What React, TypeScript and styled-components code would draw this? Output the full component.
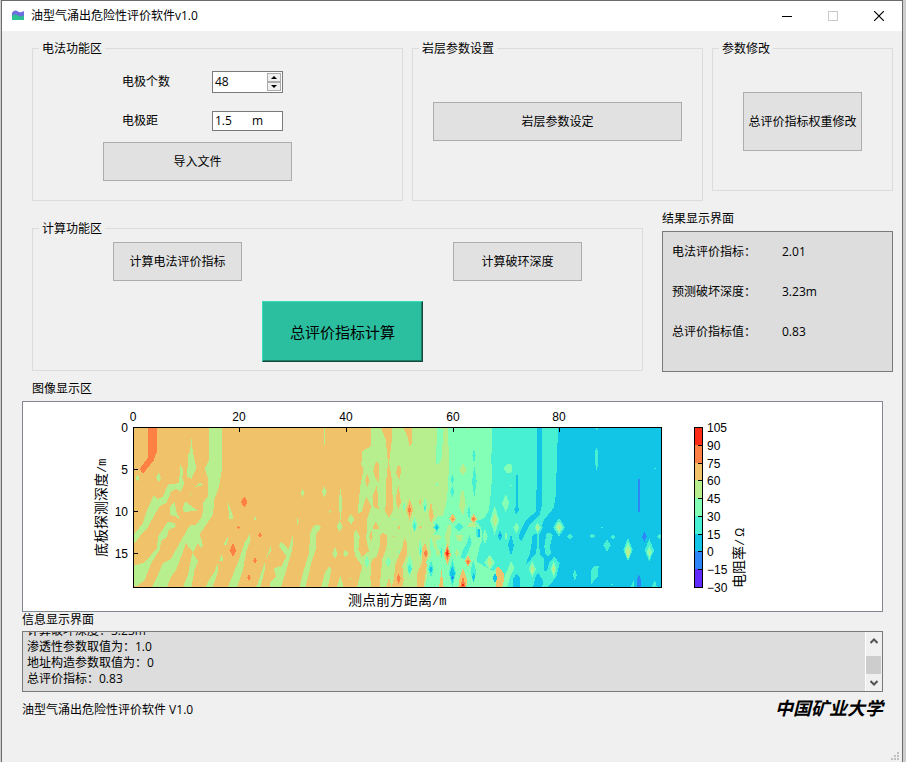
import React, { useState } from "react";
import styled, { createGlobalStyle, css } from "styled-components";

const GlobalStyle = createGlobalStyle`
  * { box-sizing: border-box; }
  body {
    margin: 0;
    font-family: "Open Sans", "Noto Sans CJK SC", sans-serif;
    font-size: 12px;
    line-height: 16px;
    color: #000;
  }
  button, input { font: inherit; color: inherit; }
`;

/* ---------- window frame ---------- */

const Desktop = styled.div`
  display: flex;
  min-height: 100vh;
  padding: 0 3px 0 1px;
  background: #cfcdcd;
`;

const Window = styled.div`
  flex: 1;
  min-width: 0;
  display: flex;
  flex-direction: column;
  background: #f0f0f0;
  border: 1px solid #6c6b6e;
  border-bottom: 0;
`;

const TitleBar = styled.header`
  display: flex;
  align-items: center;
  height: 30px;
  padding-left: 9px;
  background: #fff;
`;

const Title = styled.h1`
  flex: 1;
  margin: 0 0 0 6px;
  font-size: 12px;
  font-weight: 400;
`;

const CaptionButton = styled.button`
  display: grid;
  place-items: center;
  width: 46px;
  height: 30px;
  padding: 0;
  border: 0;
  background: none;
  color: #000;
  &:disabled { color: #c9c9c9; }
`;

const Main = styled.main`
  flex: 1;
  display: flex;
  flex-direction: column;
`;

/* ---------- layout ---------- */

const Sections = styled.div`
  display: flex;
  flex-direction: column;
  gap: 10px;
  padding: 8px 9px 0 30px;
`;

const SettingsRow = styled.div`
  display: grid;
  grid-template-columns: 371fr 291fr 181fr;
  align-items: start;
  gap: 9px;
`;

const ComputeRow = styled.div`
  display: grid;
  grid-template-columns: 611fr 231fr;
  align-items: start;
  gap: 19px;
`;

const GroupBox = styled.fieldset<{ $lowered?: boolean }>`
  min-width: 0;
  margin: ${(p) => (p.$lowered ? 8 : 0)}px 0 0;
  border: 1px solid #dcdcdc;
  padding: 0;
`;

const GroupBody = styled.div<{ $pad: string }>`
  padding: ${(p) => p.$pad};
`;

const Legend = styled.legend`
  margin-left: 6px;
  padding: 2px 3px 0;
`;

const Stack = styled.div`
  width: 189px;
  display: flex;
  flex-direction: column;
`;

const Field = styled.div<{ $after: number }>`
  display: grid;
  grid-template-columns: 90px 71px;
  align-items: center;
  padding-left: 19px;
  margin-bottom: ${(p) => p.$after}px;
`;

const InputFrame = styled.div<{ $height: number }>`
  display: flex;
  align-items: center;
  height: ${(p) => p.$height}px;
  padding: 1px 1px 1px 2px;
  background: #fff;
  border: 1px solid #7a7a7a;
`;

const TextInput = styled.input<{ $width: number }>`
  width: ${(p) => p.$width}px;
  height: 16px;
  padding: 0;
  border: 0;
  outline: 0;
  background: none;
`;

const Spinner = styled.div`
  display: flex;
  flex-direction: column;
  margin-left: auto;
`;

const StepButton = styled.button`
  display: grid;
  place-items: center;
  width: 14px;
  height: 9px;
  padding: 0;
  border: 1px solid #acacac;
  background: #f0f0f0;
`;

const PushButton = styled.button<{ $width?: number; $tall?: boolean }>`
  display: block;
  width: ${(p) => (p.$width ? `${p.$width}px` : "100%")};
  height: ${(p) => (p.$tall ? 59 : 39)}px;
  padding: 0;
  white-space: nowrap;
  background: #e1e1e1;
  border: 1px solid #adadad;
`;

const PrimaryButton = styled.button`
  width: 161px;
  height: 61px;
  padding: 0;
  font-size: 15px;
  background: #2bbf9f;
  border: 1px solid;
  border-color: #35dcb8 #16493e #16493e #35dcb8;
  box-shadow: inset -1px -1px 0 #1c7c68;
`;

const Centered = styled.div<{ $shift?: boolean }>`
  display: flex;
  justify-content: center;
  ${(p) => p.$shift && css`padding: 20px 0 0 10px;`}
`;

const ButtonPair = styled.div`
  display: flex;
  justify-content: space-between;
  padding: 0 60px 0 80px;
`;

/* ---------- results ---------- */

const Caption = styled.h2`
  margin: 0 0 4px;
  font-size: 12px;
  font-weight: 400;
`;

const ResultList = styled.dl`
  display: grid;
  grid-template-columns: 110px 1fr;
  grid-auto-rows: 40px;
  align-items: center;
  margin: 0;
  padding: 0 0 19px 9px;
  background: #ddd;
  border: 1px solid #7a7a7a;
`;

const ResultValue = styled.dd`
  margin: 0;
`;

/* ---------- image area, log, footer ---------- */

const Figure = styled.section`
  padding: 9px 19px 0 20px;
`;

const ImageCaption = styled(Caption)`
  padding-left: 10px;
`;

const ChartPanel = styled.div`
  background: #fff;
  border: 1px solid #828790;
  overflow: hidden;
`;

const Chart = styled.svg`
  display: block;
  font-family: "Liberation Sans", "Noto Sans CJK SC", sans-serif;
`;

const LogSection = styled.section`
  padding: 0 19px 0 20px;
`;

const LogCaption = styled(Caption)`
  margin-bottom: 3px;
`;

const LogBox = styled.div`
  display: flex;
  height: 61px;
  background: #ddd;
  border: 1px solid #7a7a7a;
`;

const LogText = styled.div`
  flex: 1;
  display: flex;
  flex-direction: column;
  justify-content: flex-end;
  overflow: hidden;
  padding: 0 4px 4px;
`;

const LogLine = styled.p`
  flex: none;
  margin: 0;
`;

const ScrollBar = styled.div`
  display: flex;
  flex-direction: column;
  width: 17px;
  background: #f0f0f0;
  border-left: 1px solid #fff;
`;

const ScrollButton = styled.button`
  display: grid;
  place-items: center;
  width: 100%;
  height: 17px;
  padding: 0;
  border: 0;
  background: none;
`;

const ScrollTrack = styled.div`
  flex: 1;
  padding-top: 7px;
`;

const ScrollThumb = styled.div`
  width: 15px;
  height: 18px;
  background: #cdcdcd;
`;

const Footer = styled.footer`
  display: flex;
  justify-content: space-between;
  align-items: flex-end;
  padding: 6px 19px 0 20px;
`;

const School = styled.span`
  font-size: 18px;
  line-height: 20px;
  font-weight: 700;
  font-style: italic;
`;

const GripRow = styled.div`
  display: flex;
  justify-content: flex-end;
  margin-top: auto;
  padding: 0 3px 2px;
`;

/* ---------- contour chart ---------- */

const ORANGE = "#f0c36b";
const LIME = "#b8ef8e";
const AQUA = "#83ffb6";
const TURQ = "#48f0d3";
const BLUE = "#12c5e7";
const DEEP = "#2c86f7";
const CORAL = "#ff8045";
const RED = "#ff2c17";
const VIOLET = "#612aff";

type Diamond = [number, number, number, number];

const diamondPath = (list: Diamond[]) =>
  list.map(([x, y, w, h]) => `M${x},${y - h}L${x + w},${y}L${x},${y + h}L${x - w},${y}Z`).join("");

const Diamonds = ({ fill, at }: { fill: string; at: Diamond[] }) => <path fill={fill} d={diamondPath(at)} />;

const LeftField = () => (
  <g transform="translate(-160 -82)">
    <path
      fill={CORAL}
      d="M204,82H231V158L222,182L190,222L180,208L204,175Z"
    />
    <path
      fill={LIME}
      d="M388,82H426V215L418,262L404,300L400,345L380,375L360,403L370,438L364,446L355,430L340,458L318,430L305,470L290,510L275,530L262,562H217L235,525L250,490L272,480L300,430L330,378L350,375L368,350L370,310L384,290L386,240L375,208L388,180Z
      M338,458L356,485L345,510L335,562H310L325,525L332,490Z
      M162,405L190,370L205,325L222,288L235,298L250,290L265,255L298,250L290,268L275,275L260,310L240,320L225,345L200,390L180,410L162,434Z
      M302,196L310,208L308,235L314,250L303,278L285,262L298,250Z
      M162,498L195,488L232,445L235,410L265,366L285,370L288,382L268,390L262,410L245,425L240,450L215,490L195,540L175,558L162,560Z
      M334,105L340,160L350,205L335,238L322,230L326,165L332,155Z
      M345,262L360,250L372,256Z
      M285,308L291,340L302,360L288,350L270,346L272,320Z
      M316,305L354,333L312,337L310,322Z
      M445,305L462,358H448Z M522,352H528V362H522Z M446,406L442,435H432Z M428,458L429,485H418Z
      M510,402L513,420L500,455L490,510L472,562H445L462,520L480,475L495,430Z
      M413,490L416,512L405,545L398,562H378L385,545L405,515Z
      M575,432L573,455L558,482Z M556,485V510L542,562H530L545,520Z
      M600,500L583,510L592,540L568,562H600Z"
    />
    <Diamonds fill={LIME} at={[[237, 234, 7, 15], [174, 235, 6, 11], [333, 283, 4, 2], [268, 433, 2, 2]]} />
    <Diamonds fill={CORAL} at={[[494, 307, 10, 17], [477, 384, 4, 4], [541, 407, 5, 9], [460, 452, 10, 21], [526, 482, 5, 11], [508, 533, 5, 11]]} />
  </g>
);

const MiddleField = () => (
  <g transform="translate(410 -82)">
    <path
      fill={LIME}
      d="M303,82H660V562H262L278,500L258,470L252,450V400L260,390L270,410L266,450L276,472L298,455L290,420L292,360L305,320L290,290L275,338L264,340L272,260L282,210L275,195L278,155L303,140Z
      M162,86H167V130L164,138L162,128Z
      M212,264L218,310L212,365L207,310Z
      M130,380L145,374L154,384L138,405V450L125,490L108,562H90L100,520L118,460L122,400Z
      M178,500L185,510L175,562H155L165,520Z
      M70,405L68,450L50,510L35,562H0V550L18,530L14,505L35,500L50,470L28,440L35,425L56,450Z
      M212,528L222,562H202Z M82,350L87,365L84,385Z"
    />
    <Diamonds fill={LIME} at={[[99, 280, 6, 12], [164, 276, 7, 18], [244, 359, 10, 16], [210, 380, 9, 17], [196, 461, 8, 18], [228, 461, 8, 12], [180, 335, 3, 6], [34, 284, 2, 2], [242, 537, 3, 3]]} />
    <path
      fill={ORANGE}
      d="M335,82H366V125L358,190L367,240L370,330L358,356L347,335L350,240L355,190L348,120L335,88Z
      M400,82H426V132L420,140L414,112Z
      M322,185L329,198V250L318,235L311,215L316,192Z
      M322,255L327,328L312,322L308,292Z
      M386,194L394,205L391,242L379,220Z M386,255L394,308L386,330L378,300Z
      M484,303L492,350L484,370L477,345Z
      M318,365L330,388L308,388Z M305,392L309,410L305,426L299,410Z
      M340,398L352,408L350,450L338,475L330,562H305L302,535L306,480L322,470L330,440L332,405Z
      M404,415L413,430L412,465L398,500L402,540L398,562H366L372,540L378,490L398,445Z
      M466,430L475,455L472,490L462,562H442L443,520L458,485L455,450Z
      M358,532L365,562H350Z"
    />
    <Diamonds fill={ORANGE} at={[[293, 242, 7, 22], [420, 330, 11, 34], [452, 307, 3, 10], [388, 384, 4, 6], [452, 384, 4, 4], [372, 411, 3, 3]]} />
    <path
      fill={AQUA}
      d="M503,82L522,90L515,180L505,195L498,190ZM535,82H680V562H466L474,520L470,485L484,470L480,420L500,390L490,370L505,350L520,350L530,310L535,265L538,190Z"
    />
    <Diamonds fill={AQUA} at={[[435, 375, 9, 24], [466, 317, 6, 25], [403, 320, 4, 16], [374, 360, 3, 3], [356, 487, 8, 17], [292, 487, 7, 18], [420, 498, 10, 35], [388, 457, 3, 6], [452, 447, 6, 30], [502, 255, 2, 20]]} />
    <path
      fill={LIME}
      d="M482,405H510L516,414L498,426L504,445L495,450L488,425Z M545,375L540,440L530,440L526,410L535,375Z M555,405H580L575,425H565Z M500,445L512,455L506,475L498,460Z M574,275H582L588,315L580,348L568,320Z"
    />
    <Diamonds fill={LIME} at={[[580, 210, 11, 18], [562, 460, 6, 14]]} />
    <Diamonds fill={TURQ} at={[[435, 380, 5, 14], [466, 325, 3, 12], [420, 508, 7, 16], [452, 455, 2, 10], [501, 383, 10, 14], [484, 508, 8, 25], [548, 240, 5, 16], [548, 276, 6, 18], [568, 382, 13, 14], [548, 520, 11, 44], [515, 458, 3, 16], [292, 487, 2, 3]]} />
    <path fill={TURQ} d="M600,405L592,430L578,455L574,474L584,478L596,455L606,430ZM600,320L594,345L600,355Z" />
    <Diamonds fill={BLUE} at={[[501, 383, 5, 8], [484, 510, 5, 12], [548, 522, 8, 26]]} />
    <Diamonds fill={DEEP} at={[[548, 533, 4, 6]]} />
    <path fill={ORANGE} d="M516,508L522,562H508Z M580,505L592,540L590,562H566L570,535Z" />
    <Diamonds fill={ORANGE} at={[[533, 464, 11, 34], [549, 357, 10, 15], [595, 485, 9, 18]]} />
    <Diamonds fill={CORAL} at={[[420, 331, 5, 15], [468, 461, 6, 12], [387, 537, 6, 16], [533, 462, 7, 22], [549, 359, 3, 4], [595, 486, 5, 8]]} />
    <path fill={CORAL} d="M580,530L588,562H572Z" />
    <Diamonds fill={RED} at={[[533, 461, 4, 10], [580, 556, 3, 4]]} />
  </g>
);

const RightField = () => (
  <g transform="translate(890 -82)">
    <path
      fill={TURQ}
      d="M187,82H695V562H230L222,520L205,500L190,515L165,500L140,485L150,440L158,420L155,385L140,365L165,355L178,330L185,265L188,205L185,190Z
      M140,382L150,400L146,418L138,405Z"
    />
    <Diamonds fill={TURQ} at={[[133, 168, 5, 22], [134, 245, 7, 48], [118, 338, 5, 18], [131, 516, 9, 34]]} />
    <path fill={AQUA} d="M222,205L235,193L247,195V218L230,220Z M244,485L254,505L242,530L233,562H218L225,530Z" />
    <Diamonds fill={AQUA} at={[[228, 311, 11, 27], [195, 362, 14, 44], [166, 410, 8, 24], [260, 384, 9, 16], [229, 408, 4, 14], [180, 488, 16, 24], [308, 508, 11, 24], [244, 257, 2, 3], [243, 85, 3, 5]]} />
    <Diamonds fill={LIME} at={[[196, 361, 7, 24], [180, 488, 7, 18], [308, 510, 5, 14]]} />
    <path
      fill={BLUE}
      d="M323,82H336V320L330,345L300,375L288,398L275,425L268,415L270,400L290,360L320,335V290L318,280L323,265Z
      M385,82H695V562H352L365,550L380,532L390,490L374,472L358,488L352,515L342,512V475L326,458L315,465L290,495L292,480L300,465L306,430V410L320,400L335,385L342,362L372,325L378,290L382,180Z
      M260,522L271,535V562H249V540Z M326,518L340,545L338,562H310L318,530Z
      M258,225H264V270L266,285L264,320L268,330L260,345L254,330L258,320Z"
    />
    <path fill={TURQ} d="M322,405H328V440L332,462H318L322,440Z M350,402L362,400L369,408L362,435L363,462L355,472L346,460L344,440Z" />
    <Diamonds fill={BLUE} at={[[244, 437, 9, 32], [211, 408, 7, 16], [148, 400, 4, 18], [196, 535, 7, 16], [132, 532, 5, 14], [244, 361, 2, 5]]} />
    <Diamonds fill={TURQ} at={[[325, 383, 14, 28], [388, 383, 18, 28], [372, 505, 14, 34], [421, 411, 8, 10], [488, 409, 10, 6], [550, 411, 8, 7], [532, 437, 11, 18], [595, 450, 14, 36], [659, 452, 14, 34], [436, 526, 6, 18], [516, 384, 3, 3], [676, 207, 2, 3], [690, 410, 7, 8], [501, 85, 4, 8], [547, 554, 2, 8]]} />
    <path fill={TURQ} d="M500,143L506,158L503,210H498L496,155Z M484,512L495,497L507,500L504,530L484,554Z M614,540V562H602Z M676,540L681,562H666Z" />
    <Diamonds fill={AQUA} at={[[324, 384, 9, 16], [388, 383, 12, 19], [372, 508, 9, 24], [595, 453, 10, 27], [659, 457, 8, 18]]} />
    <Diamonds fill={LIME} at={[[324, 384, 4, 8], [388, 383, 6, 10], [372, 508, 4, 14], [595, 457, 7, 18], [659, 460, 3, 6]]} />
    <path fill={DEEP} d="M626,237H630V278L633,283L630,288V336H626V288L623,283L626,278Z M627,524L634,540V562H621V545Z" />
    <Diamonds fill={DEEP} at={[[644, 411, 7, 16], [211, 408, 3, 5]]} />
    <Diamonds fill={ORANGE} at={[[132, 358, 10, 16]]} />
    <path fill={LIME} d="M118,372L134,366L140,382H114Z" />
    <Diamonds fill={CORAL} at={[[132, 358, 5, 8]]} />
    <path fill={LIME} d="M110,82H122L116,90Z" />
  </g>
);

const xTicks: [number, string][] = [[110, "0"], [216, "20"], [323, "40"], [430, "60"], [536, "80"]];
const yTicks: [number, string][] = [[25, "0"], [67, "5"], [109, "10"], [151, "15"]];
const scale: [string, string][] = [
  ["105", RED], ["90", CORAL], ["75", ORANGE], ["60", LIME], ["45", AQUA],
  ["30", TURQ], ["15", BLUE], ["0", DEEP], ["−15", VIOLET],
];
const scaleY = (i: number) => 25 + Math.round((i * 160) / 9);

const ContourChart = () => (
  <Chart width="859" height="209" viewBox="0 0 859 209" role="img" aria-label="底板探测深度与测点前方距离的电阻率图">
    <svg x="110" y="25" width="528" height="160" viewBox="0 0 1584 480" shapeRendering="crispEdges">
      <rect width="1584" height="480" fill={ORANGE} />
      <LeftField />
      <MiddleField />
      <RightField />
    </svg>
    <g shapeRendering="crispEdges" stroke="#000" fill="none">
      <rect x="110.5" y="25.5" width="528" height="160" />
      {xTicks.map(([x]) => <path key={x} d={`M${x + 0.5},26v4`} />)}
      {yTicks.map(([y]) => <path key={y} d={`M111,${y + 0.5}h4`} />)}
    </g>
    <g fontSize="12">
      {xTicks.map(([x, t]) => <text key={x} x={x} y="19" textAnchor="middle">{t}</text>)}
      {yTicks.map(([y, t]) => <text key={y} x="105" y={y + 5} textAnchor="end">{t}</text>)}
      {[...scale, ["−30", ""]].map(([t], i) => <text key={t} x="684" y={scaleY(i) + 5}>{t}</text>)}
    </g>
    <g shapeRendering="crispEdges">
      {scale.map(([t, c], i) => <rect key={t} x="671" y={scaleY(i)} width="8" height={scaleY(i + 1) - scaleY(i)} fill={c} />)}
      <rect x="671.5" y="25.5" width="8" height="160" fill="none" stroke="#000" />
      {scale.slice(1).map(([t], i) => <path key={t} d={`M675,${scaleY(i + 1) + 0.5}h4`} stroke="#000" />)}
    </g>
    <g fontSize="14">
      <text x="325" y="203">测点前方距离<tspan fontFamily="Liberation Mono" fontSize="12">/m</tspan></text>
      <text transform="translate(83 155) rotate(-90)">底板探测深度<tspan fontFamily="Liberation Mono" fontSize="12">/m</tspan></text>
      <text transform="translate(721 186) rotate(-90)">电阻率<tspan fontFamily="Liberation Mono" fontSize="12">/</tspan><tspan dx="2" fontSize="12">Ω</tspan></text>
    </g>
  </Chart>
);

/* ---------- page ---------- */

const logLines = ["计算破坏深度：3.23m", "渗透性参数取值为：1.0", "地址构造参数取值为：0", "总评价指标：0.83"];
const results = [["电法评价指标：", "2.01"], ["预测破坏深度：", "3.23m"], ["总评价指标值：", "0.83"]];

export default function App() {
  const [count, setCount] = useState(48);
  const [spacing, setSpacing] = useState("1.5");

  return (
    <>
      <GlobalStyle />
      <Desktop>
        <Window>
          <TitleBar>
            <svg width="14" height="12" viewBox="0 0 14 12" aria-hidden="true">
              <path d="M1,3C3,0 5,0 7,1.500S11,2 13,1V8H1Z" fill="#6d6ee0" />
              <path d="M1,6C3,4 5,4 7,5.500S11,7 13,5V10H1Z" fill="#2dc293" />
            </svg>
            <Title>油型气涌出危险性评价软件v1.0</Title>
            <CaptionButton aria-label="最小化">
              <svg width="10" height="10"><path d="M0,5.5H10" stroke="currentColor" /></svg>
            </CaptionButton>
            <CaptionButton aria-label="最大化" disabled>
              <svg width="10" height="10"><rect x="0.5" y="0.5" width="9" height="9" fill="none" stroke="currentColor" /></svg>
            </CaptionButton>
            <CaptionButton aria-label="关闭">
              <svg width="10" height="10"><path d="M0,0L10,10M10,0L0,10" stroke="currentColor" strokeWidth="1.2" /></svg>
            </CaptionButton>
          </TitleBar>

          <Main>
            <Sections>
              <SettingsRow>
                <GroupBox>
                  <Legend>电法功能区</Legend>
                  <GroupBody $pad="14px 0 19px 70px">
                    <Stack>
                      <Field $after={18}>
                        <label htmlFor="count">电极个数</label>
                        <InputFrame $height={22}>
                          <TextInput
                            id="count"
                            $width={44}
                            inputMode="numeric"
                            value={count}
                            onChange={(e) => setCount(Number(e.target.value) || 0)}
                          />
                          <Spinner>
                            <StepButton type="button" aria-label="增加" onClick={() => setCount(count + 1)}>
                              <svg width="6" height="3"><path d="M3,0L6,3H0Z" /></svg>
                            </StepButton>
                            <StepButton type="button" aria-label="减少" onClick={() => setCount(count - 1)}>
                              <svg width="6" height="3"><path d="M0,0H6L3,3Z" /></svg>
                            </StepButton>
                          </Spinner>
                        </InputFrame>
                      </Field>
                      <Field $after={11}>
                        <label htmlFor="spacing">电极距</label>
                        <InputFrame $height={20}>
                          <TextInput id="spacing" $width={37} value={spacing} onChange={(e) => setSpacing(e.target.value)} />
                          <span>m</span>
                        </InputFrame>
                      </Field>
                      <PushButton type="button">导入文件</PushButton>
                    </Stack>
                  </GroupBody>
                </GroupBox>

                <GroupBox>
                  <Legend>岩层参数设置</Legend>
                  <GroupBody $pad="45px 20px 59px">
                    <PushButton type="button">岩层参数设定</PushButton>
                  </GroupBody>
                </GroupBox>

                <GroupBox>
                  <Legend>参数修改</Legend>
                  <GroupBody $pad="35px 0 39px">
                    <Centered>
                      <PushButton type="button" $width={119} $tall>总评价指标权重修改</PushButton>
                    </Centered>
                  </GroupBody>
                </GroupBox>
              </SettingsRow>

              <ComputeRow>
                <GroupBox $lowered>
                  <Legend>计算功能区</Legend>
                  <GroupBody $pad="5px 0 8px">
                    <ButtonPair>
                      <PushButton type="button" $width={129}>计算电法评价指标</PushButton>
                      <PushButton type="button" $width={129}>计算破环深度</PushButton>
                    </ButtonPair>
                    <Centered $shift>
                      <PrimaryButton type="button">总评价指标计算</PrimaryButton>
                    </Centered>
                  </GroupBody>
                </GroupBox>

                <section>
                  <Caption>结果显示界面</Caption>
                  <ResultList>
                    {results.map(([name, value]) => (
                      <React.Fragment key={name}>
                        <dt>{name}</dt>
                        <ResultValue>{value}</ResultValue>
                      </React.Fragment>
                    ))}
                  </ResultList>
                </section>
              </ComputeRow>
            </Sections>

            <Figure>
              <ImageCaption>图像显示区</ImageCaption>
              <ChartPanel>
                <ContourChart />
              </ChartPanel>
            </Figure>

            <LogSection>
              <LogCaption>信息显示界面</LogCaption>
              <LogBox>
                <LogText>
                  {logLines.map((line) => <LogLine key={line}>{line}</LogLine>)}
                </LogText>
                <ScrollBar>
                  <ScrollButton type="button" aria-label="向上滚动">
                    <svg width="8" height="6"><path d="M0.5,5L4,1.5L7.5,5" fill="none" stroke="#555" strokeWidth="2" /></svg>
                  </ScrollButton>
                  <ScrollTrack><ScrollThumb /></ScrollTrack>
                  <ScrollButton type="button" aria-label="向下滚动">
                    <svg width="8" height="6"><path d="M0.5,1L4,4.5L7.5,1" fill="none" stroke="#555" strokeWidth="2" /></svg>
                  </ScrollButton>
                </ScrollBar>
              </LogBox>
            </LogSection>

            <Footer>
              <span>油型气涌出危险性评价软件 V1.0</span>
              <School>中国矿业大学</School>
            </Footer>

            <GripRow>
              <svg width="8" height="8" fill="#bfbfbf" aria-hidden="true">
                <path d="M6,0h2v2h-2zM3,3h2v2h-2zM6,3h2v2h-2zM0,6h2v2h-2zM3,6h2v2h-2zM6,6h2v2h-2z" />
              </svg>
            </GripRow>
          </Main>
        </Window>
      </Desktop>
    </>
  );
}
